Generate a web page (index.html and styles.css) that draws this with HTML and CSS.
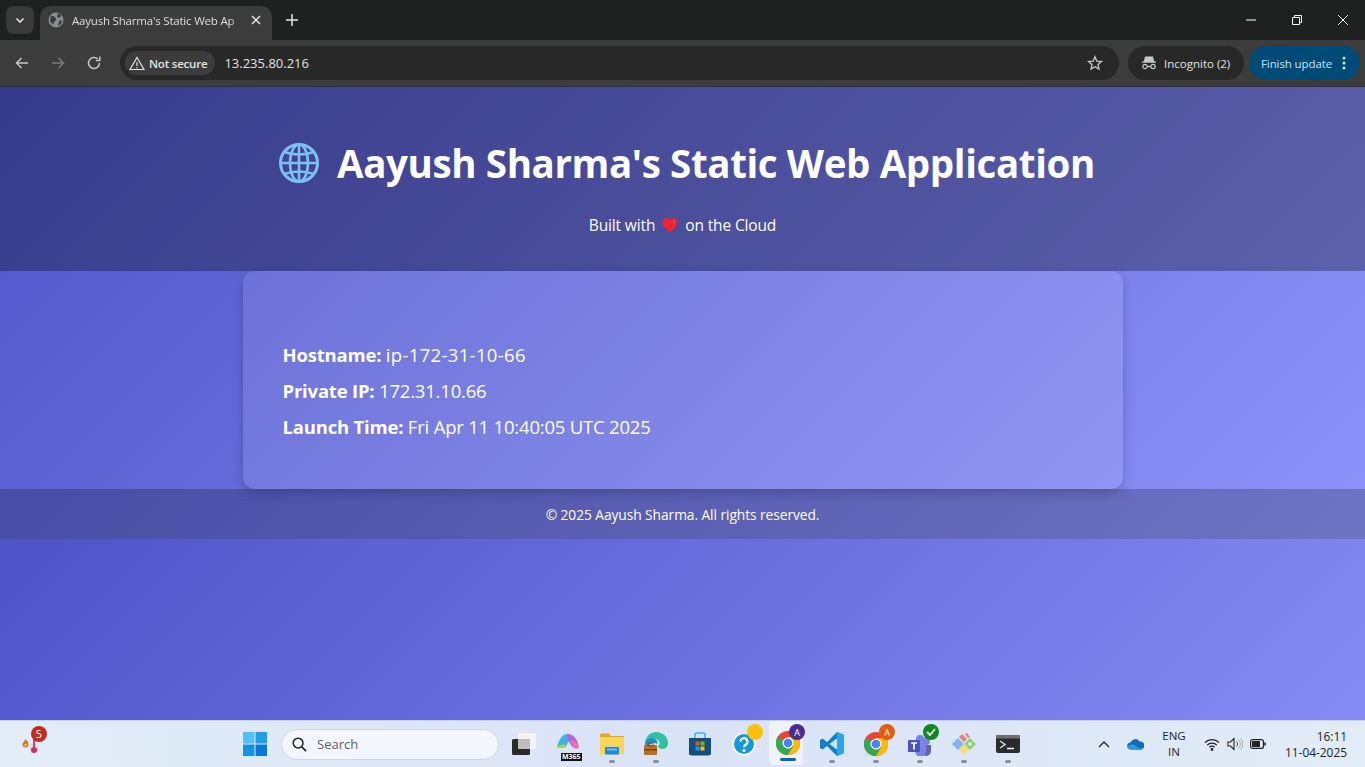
FILE: index.html
```html
<!DOCTYPE html>
<html lang="en">
<head>
    <meta charset="UTF-8">
    <title>Aayush Sharma's Static Web Application</title>
    <link rel="stylesheet" href="styles.css">
</head>
<body>
    <!-- browser tabs -->
    <div class="tabstrip">
        <button class="tab-search">
            <svg width="12" height="12" viewBox="0 0 12 12"><path d="M2.500 4.500 6 8l3.500-3.500" fill="none" stroke="#e3e3e3" stroke-width="1.600"/></svg>
        </button>
        <div class="tab">
            <svg class="tab-favicon" width="16" height="16" viewBox="0 0 16 16"><circle cx="8" cy="8" r="7.500" fill="#8b8d90"/><path d="M3 3.500 7 5l1.500 3L6 10 5 13 2 9ZM10 1l3 2-1 3-3-1ZM11 9l3-1-1 4-3 2Z" fill="#3c3c3c"/></svg>
            <span class="tab-title">Aayush Sharma's Static Web Ap</span>
            <svg width="12" height="12" viewBox="0 0 12 12"><path d="M2 2l8 8M10 2l-8 8" stroke="#e3e3e3" stroke-width="1.500"/></svg>
        </div>
        <svg class="new-tab" width="14" height="14" viewBox="0 0 14 14"><path d="M7 1v12M1 7h12" stroke="#e3e3e3" stroke-width="1.500"/></svg>
        <div class="win-controls">
            <svg width="12" height="12" viewBox="0 0 12 12"><path d="M1 6h10" stroke="#fff"/></svg>
            <svg width="12" height="12" viewBox="0 0 12 12"><path d="M1.500 3.500h7v7h-7zM3.500 3.500v-2h7v7h-2" fill="none" stroke="#fff"/></svg>
            <svg width="12" height="12" viewBox="0 0 12 12"><path d="M1 1l10 10M11 1 1 11" stroke="#fff"/></svg>
        </div>
    </div>

    <!-- address bar -->
    <div class="toolbar">
        <div class="nav">
            <svg width="16" height="16" viewBox="0 0 16 16"><path d="M14 8H3M7.500 3 2.500 8l5 5" fill="none" stroke="#c7c7c7" stroke-width="1.500"/></svg>
            <svg width="16" height="16" viewBox="0 0 16 16"><path d="M2 8h11M8.500 3l5 5-5 5" fill="none" stroke="#7a7a7a" stroke-width="1.500"/></svg>
            <svg width="16" height="16" viewBox="0 0 16 16"><path d="M13.500 8A5.500 5.500 0 1 1 11.800 4" fill="none" stroke="#c7c7c7" stroke-width="1.500"/><path d="M13.800 1.500v4h-4" fill="none" stroke="#c7c7c7" stroke-width="1.500"/></svg>
        </div>
        <div class="omnibox">
            <div class="chip">
                <svg width="16" height="15" viewBox="0 0 16 15"><path d="M8 1.500 15 13.500H1ZM8 6v4M8 11v1.300" fill="none" stroke="#e3e3e3" stroke-width="1.200"/></svg>
                <span>Not secure</span>
            </div>
            <span class="url">13.235.80.216</span>
            <svg class="star" width="16" height="16" viewBox="0 0 16 16"><path d="M8 1.800 9.800 6.100 14.500 6.500 11 9.500 12 14.100 8 11.700 4 14.100 5 9.500 1.500 6.500 6.200 6.100Z" fill="none" stroke="#c7c7c7" stroke-width="1.300"/></svg>
        </div>
        <div class="incognito">
            <svg width="16" height="14" viewBox="0 0 16 14"><path d="M4.500 1h7l1 4h-9ZM1 6.200h14" fill="#c7c7c7" stroke="#c7c7c7" stroke-width="1.200"/><circle cx="4" cy="10.500" r="2.200" fill="none" stroke="#c7c7c7" stroke-width="1.200"/><circle cx="12" cy="10.500" r="2.200" fill="none" stroke="#c7c7c7" stroke-width="1.200"/><path d="M6.200 10.500h3.600" stroke="#c7c7c7" stroke-width="1.200"/></svg>
            <span>Incognito (2)</span>
        </div>
        <div class="update">
            <span>Finish update</span>
            <svg width="4" height="14" viewBox="0 0 4 14"><circle cx="2" cy="2" r="1.500" fill="#cfe6f5"/><circle cx="2" cy="7" r="1.500" fill="#cfe6f5"/><circle cx="2" cy="12" r="1.500" fill="#cfe6f5"/></svg>
        </div>
    </div>

    <!-- the page itself -->
    <main class="page">
        <header class="hero">
            <h1>
                <svg width="40" height="40" viewBox="0 0 40 40" fill="none" stroke="#7cc0f5" stroke-width="2.600"><circle cx="20" cy="20" r="18.500" stroke-width="3"/><ellipse cx="20" cy="20" rx="9" ry="18.500"/><path d="M20 1.500v37M1.500 20h37M5 9q15 5 30 0M5 31q15-5 30 0"/></svg>
                <span>Aayush Sharma's Static Web Application</span>
            </h1>
            <p class="tagline">
                <span>Built with</span>
                <svg width="16" height="16" viewBox="0 0 16 16"><path d="M8 15.200C3.500 11.500.500 8.800.500 5.200.500 2.700 2.400 1 4.400 1 5.900 1 7.200 1.800 8 3.200 8.800 1.800 10.100 1 11.600 1c2 0 3.900 1.700 3.900 4.200 0 3.600-3 6.300-7.500 10Z" fill="#f0242e"/><path d="M11 3.500c1.300-.7 2.400.4 2 2-.5 1.200-1.800 1-2-.2-.1-.7-.3-1.400 0-1.800Z" fill="#f9686e"/></svg>
                <span>on the Cloud</span>
            </p>
        </header>
        <section class="card">
            <p><strong>Hostname:</strong> <span class="hostname">ip-172-31-10-66</span></p>
            <p><strong>Private IP:</strong> 172.31.10.66</p>
            <p><strong>Launch Time:</strong> Fri Apr 11 10:40:05 UTC 2025</p>
        </section>
        <footer class="foot">© 2025 Aayush Sharma. All rights reserved.</footer>
    </main>

    <!-- windows taskbar -->
    <div class="taskbar">
        <div class="widget">
            <svg width="20" height="24" viewBox="0 0 20 24"><path d="M5.500 7c1.500 1.500 3 3 3 5.500a3 3 0 0 1-6 0c0-2 2-3 3-5.500Z" fill="#ea6a2a"/><circle cx="5.500" cy="13" r="1.300" fill="#fbc02d"/><circle cx="14" cy="16" r="5" fill="#cfe2f7"/><path d="M14 7v11" stroke="#e0405e" stroke-width="2"/><circle cx="14" cy="18" r="3" fill="#d92b4e"/></svg>
            <span class="widget-badge">5</span>
        </div>

        <div class="start">
            <svg width="24" height="24" viewBox="0 0 24 24"><rect width="11.500" height="11.500" fill="#4cc2ff"/><rect x="12.500" width="11.500" height="11.500" fill="#1fa0ea"/><rect y="12.500" width="11.500" height="11.500" fill="#1593e3"/><rect x="12.500" y="12.500" width="11.500" height="11.500" fill="#0a78d4"/></svg>
        </div>
        <div class="search">
            <svg width="15" height="15" viewBox="0 0 16 16"><circle cx="6.500" cy="6.500" r="5.200" fill="none" stroke="#222" stroke-width="1.600"/><path d="m10.500 10.500 4.500 4.500" stroke="#222" stroke-width="1.800"/></svg>
            <span>Search</span>
        </div>

        <div class="apps">
            <div class="app">
                <svg width="24" height="24" viewBox="0 0 24 24"><rect x="6" y="1" width="18" height="16" rx="1.500" fill="#f4f4f4"/><rect y="7" width="18" height="16" rx="1.500" fill="#2a2a2a"/><rect x="6" y="7" width="12" height="10" fill="#bdbdbd"/></svg>
            </div>
            <div class="app">
                <svg width="24" height="24" viewBox="0 0 24 24"><path d="M1 15C3 8 6 2 11 2c3 0 3 3 2 6l-3 7Z" fill="#3bb4e8"/><path d="M1 15c2-2 5-3 9-2l-1 3H2Z" fill="#a3d34a"/><path d="M11 2c5 0 8 2 11 9 1 4-1 5-3 5-3 0-4-4-7-7Z" fill="#b565e0"/><path d="M14 8c3 1 8 1 9 7 0 2-3 2-5 1Z" fill="#ef6fb0"/></svg>
                <span class="m365">M365</span>
            </div>
            <div class="app running">
                <svg width="24" height="22" viewBox="0 0 24 22"><path d="M0 2a1.500 1.500 0 0 1 1.500-1.500H9L11 3H24V21H0Z" fill="#e6a817"/><rect y="4" width="24" height="17.500" rx="1" fill="#fcd35c"/><rect x="5" y="14" width="14" height="7.500" rx="1" fill="#1d8ad6"/><rect x="7" y="15.500" width="10" height="2" fill="#6cc0ef"/></svg>
            </div>
            <div class="app running">
                <svg width="24" height="24" viewBox="0 0 24 24"><path d="M1 12C1 5 6 0 12 0c7 0 12 5 12 11 0 4-3 6-6 6-2 0-4-1-4-3 2-1 2-3 1-5-2-3-8-3-10 0-2 2-3 4-4 3Z" fill="#32c0a0"/><path d="M1 12c1-5 6-7 10-5 2 1 3 3 2 5-3-2-8-1-8 4 0 3 2 6 5 7-5 0-9-5-9-11Z" fill="#1a8fd8"/><rect y="13" width="13" height="10" rx="1" fill="#b8701e"/><rect x="4" y="11" width="5" height="3" fill="none" stroke="#8a5214"/><rect y="17" width="13" height="1.500" fill="#6e430f"/></svg>
            </div>
            <div class="app">
                <svg width="24" height="24" viewBox="0 0 24 24"><path d="M7 6V3a2 2 0 0 1 2-2h6a2 2 0 0 1 2 2v3" fill="none" stroke="#35b6ea" stroke-width="1.500"/><path d="M1 6h22v15a2.500 2.500 0 0 1-2.500 2.500h-17A2.500 2.500 0 0 1 1 21Z" fill="#14507f"/><rect x="7.500" y="9.500" width="4" height="4" fill="#f25022"/><rect x="12.500" y="9.500" width="4" height="4" fill="#7fba00"/><rect x="7.500" y="14.500" width="4" height="4" fill="#00a4ef"/><rect x="12.500" y="14.500" width="4" height="4" fill="#ffb900"/></svg>
            </div>
            <div class="app">
                <svg width="24" height="24" viewBox="0 0 24 24"><circle cx="12" cy="12" r="11.500" fill="#fff"/><circle cx="12" cy="12" r="10" fill="#1299d6"/><path d="M8.500 9.500a3.500 3.500 0 1 1 5.500 3c-1.300.9-2 1.300-2 2.800" fill="none" stroke="#fff" stroke-width="2.200"/><circle cx="12" cy="18.500" r="1.500" fill="#fff"/></svg>
                <span class="badge badge-yellow"></span>
            </div>
            <div class="app active">
                <svg width="24" height="24" viewBox="0 0 24 24"><circle cx="12" cy="12" r="12" fill="#ea4335"/><path d="M12 12 1.600 6A12 12 0 0 0 12 24l5.200-9Z" fill="#34a853"/><path d="M12 6h10.400A12 12 0 0 1 12 24l5.200-9Z" fill="#fbbc04"/><circle cx="12" cy="12" r="5.500" fill="#fff"/><circle cx="12" cy="12" r="4.300" fill="#4285f4"/></svg>
                <span class="badge badge-purple">A</span>
            </div>
            <div class="app running">
                <svg width="24" height="24" viewBox="0 0 24 24"><path d="M17 0 7 10 2.500 6.500 0 8v8l2.500 1.500L7 14l10 10 7-3V3Z" fill="#0f7fcc"/><path d="M17 0l7 3v18l-7 3V6.500L9.500 12 17 17.500Z" fill="#2aa5ec"/><path d="M17 6.500 9.500 12 17 17.500Z" fill="#d7e2f4"/></svg>
            </div>
            <div class="app running">
                <svg width="24" height="24" viewBox="0 0 24 24"><circle cx="12" cy="12" r="12" fill="#ea4335"/><path d="M12 12 1.600 6A12 12 0 0 0 12 24l5.200-9Z" fill="#34a853"/><path d="M12 6h10.400A12 12 0 0 1 12 24l5.200-9Z" fill="#fbbc04"/><circle cx="12" cy="12" r="5.500" fill="#fff"/><circle cx="12" cy="12" r="4.300" fill="#4285f4"/></svg>
                <span class="badge badge-orange">A</span>
            </div>
            <div class="app running">
                <svg width="24" height="24" viewBox="0 0 24 24"><circle cx="18" cy="9" r="4" fill="#7b83eb"/><path d="M13 13h10v6a5 5 0 0 1-10 0Z" fill="#6264a7"/><circle cx="12" cy="7" r="4" fill="#7b83eb"/><path d="M7 11h11v8a5.500 5.500 0 0 1-11 0Z" fill="#7b83eb"/><rect y="8" width="12" height="12" rx="1" fill="#4b53bc"/><path d="M3 11h6M6 11v6.500" stroke="#fff" stroke-width="1.700"/></svg>
                <span class="badge badge-green"><svg width="10" height="8" viewBox="0 0 10 8"><path d="M1 4l3 3 5-6" fill="none" stroke="#fff" stroke-width="1.800"/></svg></span>
            </div>
            <div class="app running">
                <svg width="24" height="24" viewBox="0 0 24 24"><path d="M12 12 6 6 0 12l6 6Z" fill="#7fb6f0"/><path d="M12 12l6-6 6 6-6 6Z" fill="#8ccf7e"/><path d="M12 12l-5 5 5 6 5-6Z" fill="#f7dd7a"/><path d="M7 5l3-3 5 5-3 3ZM13 2l2-1 3 4-2 1Z" fill="#ee7d7d"/><circle cx="18" cy="12" r="1.700" fill="#e6f5dc"/></svg>
            </div>
            <div class="app running">
                <svg width="24" height="20" viewBox="0 0 24 20"><rect width="24" height="18" y="1" rx="2" fill="#2b2b2b"/><path d="M0 3a2 2 0 0 1 2-2h20a2 2 0 0 1 2 2v1.500H0Z" fill="#6f6f6f"/><path d="M4 7l5 3.500L4 14" fill="none" stroke="#d9d9d9" stroke-width="1.500"/><path d="M11 14.500h7" stroke="#fff" stroke-width="1.500"/></svg>
            </div>
        </div>

        <div class="tray">
            <svg class="tray-chevron" width="12" height="8" viewBox="0 0 12 8"><path d="M1 7l5-5 5 5" fill="none" stroke="#222" stroke-width="1.300"/></svg>
            <svg class="tray-cloud" width="17" height="12" viewBox="0 0 17 12"><path d="M4 11.500a3.500 3.500 0 0 1-.5-7A5 5 0 0 1 12.500 3.500 4 4 0 0 1 14 11.500Z" fill="#0f6cbd"/><path d="M4 11.500c-2 0-3.500-1-3.500-2.500 1-2 4-3 7-2l4 3 4.500-.5c0 1.500-1 2.500-2.500 2.500Z" fill="#2a9be6"/></svg>
            <div class="lang"><span>ENG</span><span>IN</span></div>
            <div class="tray-status">
                <svg width="16" height="13" viewBox="0 0 16 13" fill="none" stroke="#222" stroke-width="1.200"><path d="M1 4.500a10 10 0 0 1 14 0M3.200 7a7 7 0 0 1 9.600 0M5.400 9.300a4 4 0 0 1 5.200 0"/><circle cx="8" cy="11.500" r=".8" fill="#222"/></svg>
                <svg width="16" height="14" viewBox="0 0 16 14" fill="none"><path d="M1 5h2.500L7 1.500v11L3.500 9H1Z" stroke="#222" stroke-width="1.100"/><path d="M9.500 4.500a3.500 3.500 0 0 1 0 5" stroke="#555" stroke-width="1"/><path d="M11.500 2.500a6.500 6.500 0 0 1 0 9M13.500 1a9 9 0 0 1 0 12" stroke="#aaa" stroke-width="1"/></svg>
                <svg width="16" height="10" viewBox="0 0 16 10"><rect x=".6" y=".6" width="12.800" height="8.800" rx="2" fill="none" stroke="#222" stroke-width="1.200"/><rect x="2" y="2" width="8" height="6" rx=".5" fill="#222"/><rect x="14.300" y="3.300" width="1.500" height="3.400" fill="#222"/></svg>
            </div>
            <div class="clock"><span>16:11</span><span>11-04-2025</span></div>
        </div>
    </div>
</body>
</html>
```

FILE: styles.css
```css
* {
    margin: 0;
    padding: 0;
    box-sizing: border-box;
}

html, body {
    height: 100%;
    overflow: hidden;
}

body {
    display: flex;
    flex-direction: column;
    font-family: "Open Sans", "Noto Sans", sans-serif;
    color: #fff;
    background: #202124;
}

/* tab row */
.tabstrip {
    display: flex;
    align-items: flex-end;
    height: 40px;
    padding-left: 6px;
    background: #1f2120;
}

.tab-search {
    display: flex;
    align-items: center;
    justify-content: center;
    width: 28px;
    height: 28px;
    margin: 0 6px 6px 0;
    border: 0;
    border-radius: 8px;
    background: #3a3a3a;
}

.tab {
    display: flex;
    align-items: center;
    width: 232px;
    height: 34px;
    padding: 0 10px 6px 8px;
    border-radius: 10px 10px 0 0;
    background: #3c3c3c;
}

.tab-favicon {
    flex: none;
    margin-right: 8px;
}

.tab-title {
    flex: 1;
    overflow: hidden;
    white-space: nowrap;
    font-size: 11.500px;
    letter-spacing: -.2px;
    color: #dedede;
    -webkit-mask-image: linear-gradient(to right, #000 88%, transparent);
    mask-image: linear-gradient(to right, #000 88%, transparent);
}

.new-tab {
    margin: 0 0 13px 13px;
}

.win-controls {
    display: flex;
    align-items: center;
    gap: 34px;
    margin: 0 16px 14px auto;
}

/* address row */
.toolbar {
    display: flex;
    align-items: center;
    height: 47px;
    padding-left: 14px;
    background: #3c3c3c;
    border-bottom: 1px solid #2f2f2f;
}

.nav {
    display: flex;
    align-items: center;
    gap: 20px;
}

.omnibox {
    display: flex;
    align-items: center;
    width: 999px;
    height: 34px;
    margin-left: 18px;
    padding: 0 16px 0 5px;
    border-radius: 17px;
    background: #282828;
}

.chip {
    display: flex;
    align-items: center;
    gap: 4px;
    height: 24px;
    padding: 0 8px 0 4px;
    border-radius: 12px;
    background: #3c3c3c;
    font-size: 11.500px;
    font-weight: 600;
    letter-spacing: -.2px;
    color: #e3e3e3;
}

.url {
    margin-left: 9px;
    font-size: 13px;
    color: #e3e3e3;
}

.star {
    margin-left: auto;
}

.incognito {
    display: flex;
    align-items: center;
    gap: 7px;
    width: 116px;
    height: 34px;
    margin-left: 9px;
    padding-left: 13px;
    border-radius: 17px;
    background: #282828;
    font-size: 11.500px;
    color: #e3e3e3;
}

.update {
    display: flex;
    align-items: center;
    gap: 10px;
    width: 111px;
    height: 34px;
    margin-left: 5px;
    padding-left: 12px;
    border-radius: 17px;
    background: #004a77;
    font-size: 11.500px;
    letter-spacing: -.1px;
    color: #c2e7ff;
}

/* web page - the gradient tiles at the height of the content */
.page {
    flex: 1;
    background: linear-gradient(135deg, #4e54c8, #8f94fb) 0 0 / 100% 452px;
}

.hero {
    display: flex;
    flex-direction: column;
    align-items: center;
    height: 184px;
    padding-top: 49px;
    background: rgba(0, 0, 0, .3);
}

.hero h1 {
    display: flex;
    align-items: center;
    gap: 18px;
    height: 54px;
    padding-left: 9px;
    font-size: 38.500px;
    font-weight: 700;
    letter-spacing: -.38px;
    white-space: nowrap;
}

.tagline {
    display: flex;
    align-items: center;
    gap: 7px;
    margin-top: 23px;
    font-size: 15.500px;
    line-height: 24px;
    letter-spacing: -.14px;
}

.card {
    display: flex;
    flex-direction: column;
    gap: 12px;
    width: 880px;
    height: 218px;
    margin: 0 auto;
    padding: 72px 40px 0;
    border-radius: 12px;
    background: rgba(255, 255, 255, .1);
    box-shadow: 0 4px 12px rgba(0, 0, 0, .2);
    font-size: 18.500px;
    line-height: 24px;
    letter-spacing: -.2px;
}

.hostname {
    letter-spacing: .33px;
}

.foot {
    height: 50px;
    background: rgba(0, 0, 0, .22);
    text-align: center;
    font-size: 13.800px;
    line-height: 52px;
    letter-spacing: -.08px;
}

/* taskbar */
.taskbar {
    display: flex;
    align-items: center;
    height: 47px;
    border-top: 1px solid #c6d2e6;
    background: linear-gradient(to right, #e2edf8, #d9e3f6 50%, #e1ecf7);
    color: #222;
}

.widget {
    position: relative;
    display: flex;
    width: 20px;
    height: 24px;
    margin-left: 20px;
}

.widget-badge {
    position: absolute;
    top: -6px;
    left: 11px;
    width: 16px;
    height: 16px;
    border-radius: 50%;
    background: #c42b1c;
    color: #fff;
    font-size: 11px;
    line-height: 16px;
    text-align: center;
}

.start {
    display: flex;
    margin-left: 203px;
}

.search {
    display: flex;
    align-items: center;
    gap: 10px;
    width: 218px;
    height: 31px;
    margin-left: 14px;
    padding-left: 10px;
    border: 1px solid #ccd6e8;
    border-radius: 16px;
    background: #f3f7fd;
    font-size: 13px;
    color: #5f5f5f;
}

.apps {
    display: flex;
    margin-left: 3px;
}

.app {
    position: relative;
    display: flex;
    align-items: center;
    justify-content: center;
    width: 44px;
    height: 46px;
    border-radius: 4px;
}

.app.running::after,
.app.active::after {
    content: "";
    position: absolute;
    bottom: 4px;
    left: 19px;
    width: 6px;
    height: 3px;
    border-radius: 2px;
    background: #8a919e;
}

.app.active {
    width: 34px;
    height: 44px;
    margin: 0 7px 0 3px;
    padding-left: 4px;
    background: #eef2fb;
    box-shadow: 3px 0 0 #dfe6f3;
}

.app.active::after {
    left: 11px;
    width: 16px;
    background: #0067c0;
}

.m365 {
    position: absolute;
    bottom: 6px;
    left: 15px;
    padding: 0 1px;
    background: #111;
    color: #fff;
    font-size: 7px;
    font-weight: 700;
    line-height: 8px;
}

.badge {
    position: absolute;
    top: 3px;
    left: 25px;
    display: flex;
    align-items: center;
    justify-content: center;
    width: 16px;
    height: 16px;
    border-radius: 50%;
    color: #fff;
    font-size: 9px;
}

.active .badge {
    left: 20px;
}

.badge-yellow { background: #fdc00f; }
.badge-purple { background: #4c2c92; }
.badge-orange { background: #e35d0c; }
.badge-green { background: #0f8a1a; }

.tray {
    display: flex;
    align-items: center;
    flex: 1;
    font-size: 11.500px;
}

.tray-chevron {
    margin-left: 68px;
}

.tray-cloud {
    margin-left: 17px;
}

.lang {
    display: flex;
    flex-direction: column;
    align-items: center;
    width: 30px;
    margin-left: 15px;
    line-height: 16px;
}

.tray-status {
    display: flex;
    align-items: center;
    gap: 7px;
    margin-left: 15px;
}

.clock {
    display: flex;
    flex-direction: column;
    align-items: flex-end;
    margin: 0 18px 0 auto;
    line-height: 16px;
    font-size: 11.900px;
}
```
